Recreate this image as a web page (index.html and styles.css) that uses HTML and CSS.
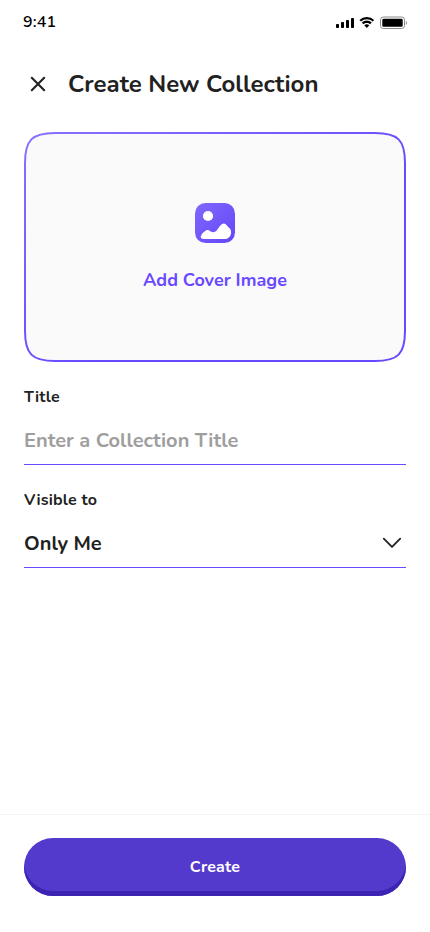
FILE: index.html
```
<!DOCTYPE html>
<html lang="en">
<head>
<meta charset="utf-8">
<meta name="viewport" content="width=device-width, initial-scale=1">
<title>Create New Collection</title>
<link rel="stylesheet" href="styles.css">
</head>
<body>
<main class="screen">
  <div class="status">
    <span class="time">9:41</span>
    <svg class="indicators" width="72" height="14" viewBox="0 0 72 14">
      <rect x="0" y="9" width="3" height="4" rx=".8"/>
      <rect x="5" y="7" width="3" height="6" rx=".8"/>
      <rect x="10" y="5" width="3" height="8" rx=".8"/>
      <rect x="15" y="3" width="3" height="10" rx=".8"/>
      <path d="M30.8 4.3c2.2 0 4.2.8 5.8 2.3l1.6-1.6a10.8 10.8 0 0 0-14.8 0L25 6.6a8.4 8.4 0 0 1 5.8-2.3Z"/>
      <path d="M30.8 8c1.3 0 2.4.5 3.3 1.3l1.7-1.7a7.2 7.2 0 0 0-10 0l1.7 1.7c.9-.8 2-1.3 3.3-1.3Z"/>
      <path d="m33.3 10.3-2.5 2.6-2.5-2.6a3.7 3.7 0 0 1 5 0Z"/>
      <rect x="44.5" y="2" width="24" height="11.5" rx="2.8" fill="none" stroke="#8c8c8c"/>
      <rect x="46.3" y="3.8" width="20.4" height="8" rx="1.3"/>
      <path d="M69.8 6v4c.8-.4 1.3-1.1 1.3-2s-.5-1.6-1.3-2Z" fill="#999"/>
    </svg>
  </div>
  <header class="header">
    <button class="close" aria-label="Close">
      <svg width="16" height="16" viewBox="0 0 16 16"><path d="m1.8 1.8 12.4 12.4M14.2 1.8 1.8 14.2"/></svg>
    </button>
    <h1 class="heading">Create New Collection</h1>
  </header>
  <button class="cover">
    <svg class="cover-frame" width="382" height="230" viewBox="0 0 382 230">
      <defs><linearGradient id="violet" x1="0" y1="0" x2="1" y2="1"><stop offset="0" stop-color="#8a70ff"/><stop offset=".6" stop-color="#6949ff"/></linearGradient></defs>
      <path d="M31 1H351C374 1 381 8 381 31V199C381 222 374 229 351 229H31C8 229 1 222 1 199V31C1 8 8 1 31 1Z"/>
    </svg>
    <svg class="cover-icon" width="40" height="40" viewBox="0 0 40 40">
      <defs><linearGradient id="violet-icon" x1="0" y1="0" x2="1" y2="1"><stop offset="0" stop-color="#8068ff"/><stop offset="1" stop-color="#6247f5"/></linearGradient></defs>
      <rect width="40" height="40" rx="10.5" fill="url(#violet-icon)"/>
      <circle cx="13" cy="13" r="5.1" fill="#fff"/>
      <path d="M6.2 32.2c1-2.2 3-3.6 4.8-4.8 1.5-1 2.7-.4 4 .6 2.6 1.8 4.6 1.8 6.6-.4 2.2-2.4 3.7-6.3 7-7 2.4-.3 3.3 2.3 5.2 4 1.5 1.3 2.4 2.5 2.3 4.6-.1 3.8-2.3 6.7-6.4 6.8H9.5c-2.8 0-4.6-1.1-3.3-3.8Z" fill="#fff"/>
    </svg>
    <span class="cover-label">Add Cover Image</span>
  </button>
  <section class="field">
    <span class="label">Title</span>
    <div class="control"><span class="placeholder">Enter a Collection Title</span></div>
  </section>
  <section class="field">
    <span class="label">Visible to</span>
    <div class="control"><span class="value">Only Me</span>
      <svg class="chevron" width="20" height="12" viewBox="0 0 20 12"><path d="m1.8 1.7 8.2 8.2 8.2-8.2"/></svg>
    </div>
  </section>
  <footer class="footer"><button class="create"><span>Create</span></button></footer>
</main>
</body>
</html>
```
FILE: styles.css
```
* { box-sizing: border-box; }
body { margin: 0; background: #fff; }
button { border: 0; padding: 0; background: none; font: inherit; color: inherit; }
svg { display: block; flex: none; }
.screen {
  width: 430px; height: 932px; display: flex; flex-direction: column; overflow: hidden;
  font-family: Nunito, Lato, sans-serif; font-weight: 700; color: #212121; white-space: nowrap;
}
.status { height: 44px; padding: 0 22px 0 23px; display: flex; justify-content: space-between; align-items: center; color: #000; }
.time { font-size: 16px; line-height: 22px; font-weight: 600; letter-spacing: .2px; }
.indicators { fill: #000; }
.header { height: 80px; padding-left: 24px; display: flex; align-items: center; gap: 16px; }
.close { width: 28px; height: 28px; display: grid; place-items: center; }
.close path { fill: none; stroke: #212121; stroke-width: 2.1; stroke-linecap: round; }
.heading { margin: 0; font-size: 24px; line-height: 32px; }
.cover {
  position: relative; height: 230px; margin: 8px 24px 0; padding-top: 70.5px; flex: none;
  display: flex; flex-direction: column; align-items: center; gap: 23.5px;
}
.cover-frame { position: absolute; inset: 0; }
.cover-frame path { fill: #fafafa; stroke: url(#violet); stroke-width: 2; }
.cover-icon, .cover-label { position: relative; }
.cover-label { font-size: 18px; line-height: 28px; color: #6949ff; }
.field { height: 79px; margin: 24px 24px 0; flex: none; }
.label { display: block; font-size: 16px; line-height: 22px; letter-spacing: .2px; }
.control { height: 57px; padding-bottom: 7px; display: flex; align-items: flex-end; justify-content: space-between; border-bottom: 1px solid #6949ff; font-size: 20px; line-height: 32px; }
.placeholder { color: #9e9e9e; }
.chevron { margin: 0 4px 11px 0; }
.chevron path { fill: none; stroke: #212121; stroke-width: 1.8; stroke-linecap: round; stroke-linejoin: round; }
.footer { height: 118px; margin-top: auto; padding: 23px 24px 0; border-top: 1px solid #f3f3f3; }
.create { width: 100%; height: 58px; border-radius: 29px; background: #543acc; box-shadow: inset 0 -5px #3d23b2; color: #fff; font-size: 16px; line-height: 22px; letter-spacing: .2px; display: grid; place-items: center; }
```
